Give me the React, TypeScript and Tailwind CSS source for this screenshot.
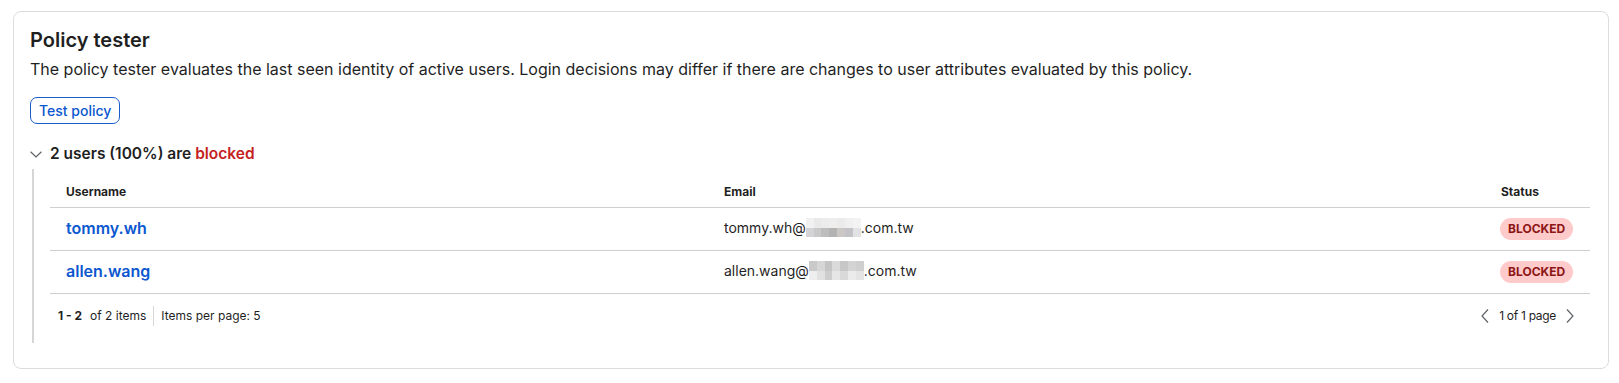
import React from "react";

const users = [
  {
    name: "tommy.wh",
    local: "tommy.wh@",
    blur: [
      ["#f1f1f1", "#e9e9e9", "#ececec", "#eeeeee", "#ebebeb", "#f0f0f0", "#f3f3f3"],
      ["#d4d4d6", "#c9c9c9", "#bdbdbd", "#b3b3b3", "#cbc7c5", "#c3c3c7", "#e2e2e4"],
    ],
  },
  {
    name: "allen.wang",
    local: "allen.wang@",
    blur: [
      ["#c9c9c9", "#d6d6d6", "#c4c4c4", "#dadada", "#c7c7c7", "#d3d3d3", "#cfcfcf"],
      ["#eeeeee", "#e1e1e1", "#cdcdcd", "#e6e6e6", "#d9d9d9", "#ebebeb", "#e4e4e4"],
    ],
  },
];

function Blur({ cells }: { cells: string[][] }) {
  return (
    <span className="inline-flex flex-col w-[55px] h-[19px] align-middle">
      {cells.map((row, i) => (
        <span key={i} className="flex flex-1">
          {row.map((c, j) => (
            <span key={j} className="flex-1" style={{ backgroundColor: c }} />
          ))}
        </span>
      ))}
    </span>
  );
}

function Chevron({ dir }: { dir: "down" | "left" | "right" }) {
  if (dir === "down") {
    return (
      <svg width="12" height="7" viewBox="0 0 12 7" fill="none">
        <path d="M0.6 0.8 L6 6 L11.4 0.8" stroke="#5f6368" strokeWidth="1.2" />
      </svg>
    );
  }
  return (
    <svg width="8" height="14" viewBox="0 0 8 14" fill="none">
      <path
        d={dir === "left" ? "M7 0.5 L1 7 L7 13.5" : "M1 0.5 L7 7 L1 13.5"}
        stroke="#5f6368"
        strokeWidth="1.2"
      />
    </svg>
  );
}

export default function App() {
  return (
    <div className="w-[1619px] h-[383px] bg-white font-['Inter',sans-serif] text-[#202124] pt-[11px]">
      <div className="ml-[13px] w-[1596px] h-[358px] border border-[#dadce0] rounded-lg pl-4 pr-[18px] pt-[14px]">
        <h2 className="text-[20px] leading-[28px] font-semibold text-[#1f1f1f]">Policy tester</h2>
        <p className="mt-[3px] text-[16px] leading-[24px] text-[#1f1f1f]">
          The policy tester evaluates the last seen identity of active users. Login decisions may differ if there are changes to user attributes evaluated by this policy.
        </p>
        <button className="mt-4 h-[27px] px-[8px] border border-[#1a5ccc] rounded-[7px] text-[14px] font-medium text-[#0b57d0] leading-none">
          Test policy
        </button>

        <div className="mt-[18px] flex items-center h-6">
          <span className="w-[20px] flex justify-start">
            <Chevron dir="down" />
          </span>
          <span className="text-[15.5px] font-semibold text-[#1f1f1f]">
            2 users (100%) are <span className="text-[#c5221f]">blocked</span>
          </span>
        </div>

        <div className="mt-[3px] ml-[2px] border-l-2 border-[#d6d6d6] pl-4 pb-[5px]">
          <div className="grid grid-cols-[658px_777px_1fr] text-[12px] leading-4 font-bold text-[#1f1f1f] h-[39px] items-end pb-[7px] border-b border-[#cfcfcf]">
            <div className="pl-4">Username</div>
            <div className="pl-4">Email</div>
            <div className="pl-4">Status</div>
          </div>
          {users.map((u) => (
            <div
              key={u.name}
              className="grid grid-cols-[658px_777px_1fr] items-center h-[43px] pb-[3px] border-b border-[#cfcfcf]"
            >
              <div className="pl-4 text-[16px] font-semibold text-[#0b57d0]">{u.name}</div>
              <div className="pl-4 text-[14px] text-[#1f1f1f] flex items-center">
                <span>{u.local}</span>
                <Blur cells={u.blur} />
                <span>.com.tw</span>
              </div>
              <div className="pl-[15px]">
                <span className="inline-flex items-center h-[22px] px-[8px] rounded-full bg-[#ffcaca] text-[12px] font-bold text-[#8c1515]">
                  BLOCKED
                </span>
              </div>
            </div>
          ))}
          <div className="flex items-center h-[44px] text-[12px] text-[#1f1f1f]">
            <div className="flex items-center pl-[8px]">
              <span className="font-bold">1 - 2</span>
              <span className="ml-[8px]">of 2 items</span>
              <span className="mx-[7px] w-px h-[20px] bg-[#d6d6d6]" />
              <span>Items per page: 5</span>
            </div>
            <div className="ml-auto flex items-center gap-[10px] pr-[16px]">
              <Chevron dir="left" />
              <span className="tracking-[-0.3px]">1 of 1 page</span>
              <Chevron dir="right" />
            </div>
          </div>
        </div>
      </div>
    </div>
  );
}
